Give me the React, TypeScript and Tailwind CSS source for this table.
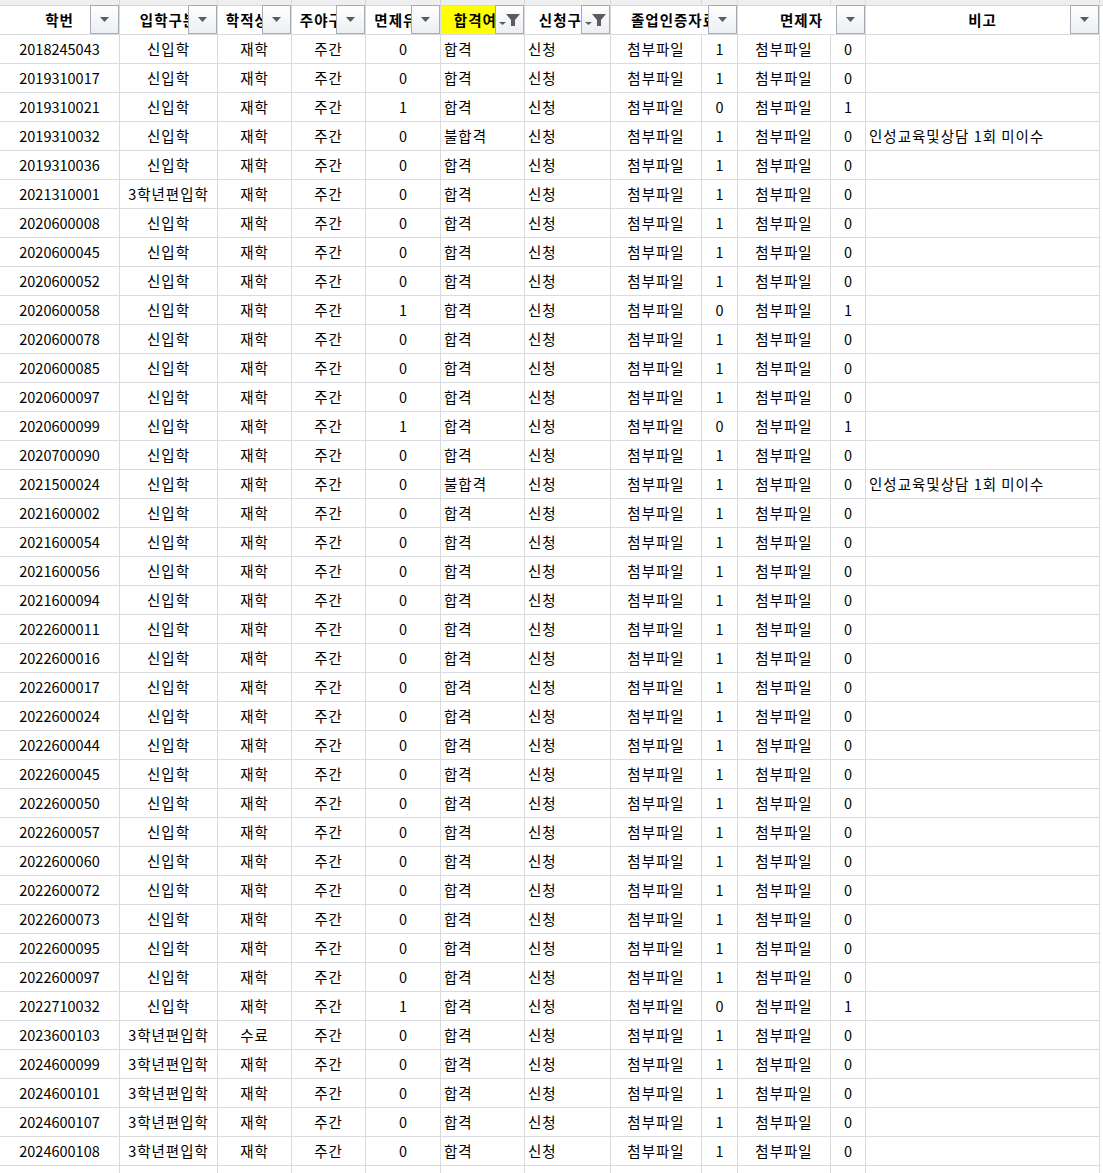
const W = [
  "w-[120px]",
  "w-[98px]",
  "w-[74px]",
  "w-[74px]",
  "w-[75px]",
  "w-[84px]",
  "w-[86px]",
  "w-[91px]",
  "w-[36px]",
  "w-[93px]",
  "w-[35px]",
  "w-[234px]",
];

// alignment per column: c = centered, l = left
const ALIGN = ["c", "c", "c", "c", "c", "l", "l", "c", "c", "c", "c", "l"];

type Head = { label: string; w: string; filter?: boolean; yellow?: boolean };

const HEADS: Head[] = [
  { label: "학번", w: "w-[120px]" },
  { label: "입학구분", w: "w-[98px]" },
  { label: "학적상태", w: "w-[74px]" },
  { label: "주야구분", w: "w-[74px]" },
  { label: "면제유무", w: "w-[75px]" },
  { label: "합격여부", w: "w-[84px]", filter: true, yellow: true },
  { label: "신청구분", w: "w-[86px]", filter: true },
  { label: "졸업인증자료", w: "w-[127px]" },
  { label: "면제자", w: "w-[128px]" },
  { label: "비고", w: "w-[234px]" },
];

const NOTE = "인성교육및상담 1회 미이수";

// [학번, 입학구분, 학적상태, 면제, 합격, 증빙, 면제자, 비고]
const RAW: [string, string, string, string, string, string, string, string][] = [
  ["2018245043", "신입학", "재학", "0", "합격", "1", "0", ""],
  ["2019310017", "신입학", "재학", "0", "합격", "1", "0", ""],
  ["2019310021", "신입학", "재학", "1", "합격", "0", "1", ""],
  ["2019310032", "신입학", "재학", "0", "불합격", "1", "0", NOTE],
  ["2019310036", "신입학", "재학", "0", "합격", "1", "0", ""],
  ["2021310001", "3학년편입학", "재학", "0", "합격", "1", "0", ""],
  ["2020600008", "신입학", "재학", "0", "합격", "1", "0", ""],
  ["2020600045", "신입학", "재학", "0", "합격", "1", "0", ""],
  ["2020600052", "신입학", "재학", "0", "합격", "1", "0", ""],
  ["2020600058", "신입학", "재학", "1", "합격", "0", "1", ""],
  ["2020600078", "신입학", "재학", "0", "합격", "1", "0", ""],
  ["2020600085", "신입학", "재학", "0", "합격", "1", "0", ""],
  ["2020600097", "신입학", "재학", "0", "합격", "1", "0", ""],
  ["2020600099", "신입학", "재학", "1", "합격", "0", "1", ""],
  ["2020700090", "신입학", "재학", "0", "합격", "1", "0", ""],
  ["2021500024", "신입학", "재학", "0", "불합격", "1", "0", NOTE],
  ["2021600002", "신입학", "재학", "0", "합격", "1", "0", ""],
  ["2021600054", "신입학", "재학", "0", "합격", "1", "0", ""],
  ["2021600056", "신입학", "재학", "0", "합격", "1", "0", ""],
  ["2021600094", "신입학", "재학", "0", "합격", "1", "0", ""],
  ["2022600011", "신입학", "재학", "0", "합격", "1", "0", ""],
  ["2022600016", "신입학", "재학", "0", "합격", "1", "0", ""],
  ["2022600017", "신입학", "재학", "0", "합격", "1", "0", ""],
  ["2022600024", "신입학", "재학", "0", "합격", "1", "0", ""],
  ["2022600044", "신입학", "재학", "0", "합격", "1", "0", ""],
  ["2022600045", "신입학", "재학", "0", "합격", "1", "0", ""],
  ["2022600050", "신입학", "재학", "0", "합격", "1", "0", ""],
  ["2022600057", "신입학", "재학", "0", "합격", "1", "0", ""],
  ["2022600060", "신입학", "재학", "0", "합격", "1", "0", ""],
  ["2022600072", "신입학", "재학", "0", "합격", "1", "0", ""],
  ["2022600073", "신입학", "재학", "0", "합격", "1", "0", ""],
  ["2022600095", "신입학", "재학", "0", "합격", "1", "0", ""],
  ["2022600097", "신입학", "재학", "0", "합격", "1", "0", ""],
  ["2022710032", "신입학", "재학", "1", "합격", "0", "1", ""],
  ["2023600103", "3학년편입학", "수료", "0", "합격", "1", "0", ""],
  ["2024600099", "3학년편입학", "재학", "0", "합격", "1", "0", ""],
  ["2024600101", "3학년편입학", "재학", "0", "합격", "1", "0", ""],
  ["2024600107", "3학년편입학", "재학", "0", "합격", "1", "0", ""],
  ["2024600108", "3학년편입학", "재학", "0", "합격", "1", "0", ""],
];

const ROWS = RAW.map(([id, kind, st, ex, pass, ev, exm, note]) => [
  id,
  kind,
  st,
  "주간",
  ex,
  pass,
  "신청",
  "첨부파일",
  ev,
  "첨부파일",
  exm,
  note,
]);

// hangul in the sheet font runs wider than Noto, so hangul text gets a little tracking
const isNumber = (v: string) => /^\d+$/.test(v);

function Arrow() {
  return (
    <svg width="9" height="5" viewBox="0 0 9 5">
      <path d="M0 0h9L4.5 5z" fill="#5c5c5c" />
    </svg>
  );
}

function Funnel() {
  return (
    <svg width="22" height="16" viewBox="0 0 22 16">
      <path d="M0 10h7l-3.5 3z" fill="#5c5c5c" />
      <path d="M7 2h14l-5 6v6h-4V8z" fill="#5c5c5c" />
    </svg>
  );
}

function FilterButton({ active }: { active?: boolean }) {
  return (
    <div className="absolute right-0 top-[-1px] z-10 flex h-[29px] w-[29px] items-center justify-center border border-[#a6acb5] bg-gradient-to-b from-white to-[#eceef1]">
      {active ? <Funnel /> : <Arrow />}
    </div>
  );
}

export default function App() {
  return (
    <div
      className="h-[1173px] w-[1103px] overflow-hidden bg-white text-[14.5px] text-black"
      style={{ fontFamily: '"Noto Sans CJK KR", "Noto Sans", sans-serif' }}
    >
      {/* tail of the row above */}
      <div className="flex h-[6px] border-b border-[#d6d7db] bg-[#efefef]">
        {W.map((w, i) => (
          <div key={i} className={`${w} shrink-0 border-r border-[#d6d7db]`} />
        ))}
      </div>

      {/* header */}
      <div className="flex h-[29px]">
        {HEADS.map((h, i) => (
          <div
            key={i}
            className={`${h.w} relative flex shrink-0 items-center justify-center whitespace-nowrap border-b border-r border-[#dadbdf] font-bold tracking-[1px] ${
              h.yellow ? "bg-[#ffff00]" : "bg-white"
            }`}
          >
            <span className="leading-none">{h.label}</span>
            <FilterButton active={h.filter} />
          </div>
        ))}
      </div>

      {/* data */}
      {ROWS.map((r, ri) => (
        <div key={ri} className="flex h-[29px]">
          {r.map((v, ci) => (
            <div
              key={ci}
              className={`${W[ci]} flex shrink-0 items-center overflow-hidden whitespace-nowrap border-b border-r border-[#dadbdf] ${
                ALIGN[ci] === "c" ? "justify-center" : "justify-start pl-[3px]"
              } ${isNumber(v) ? "" : "tracking-[1px]"}`}
            >
              <span className="leading-none">{v}</span>
            </div>
          ))}
        </div>
      ))}

      <div className="flex h-[29px]">
        {W.map((w, i) => (
          <div key={i} className={`${w} shrink-0 border-r border-[#dadbdf]`} />
        ))}
      </div>
    </div>
  );
}
